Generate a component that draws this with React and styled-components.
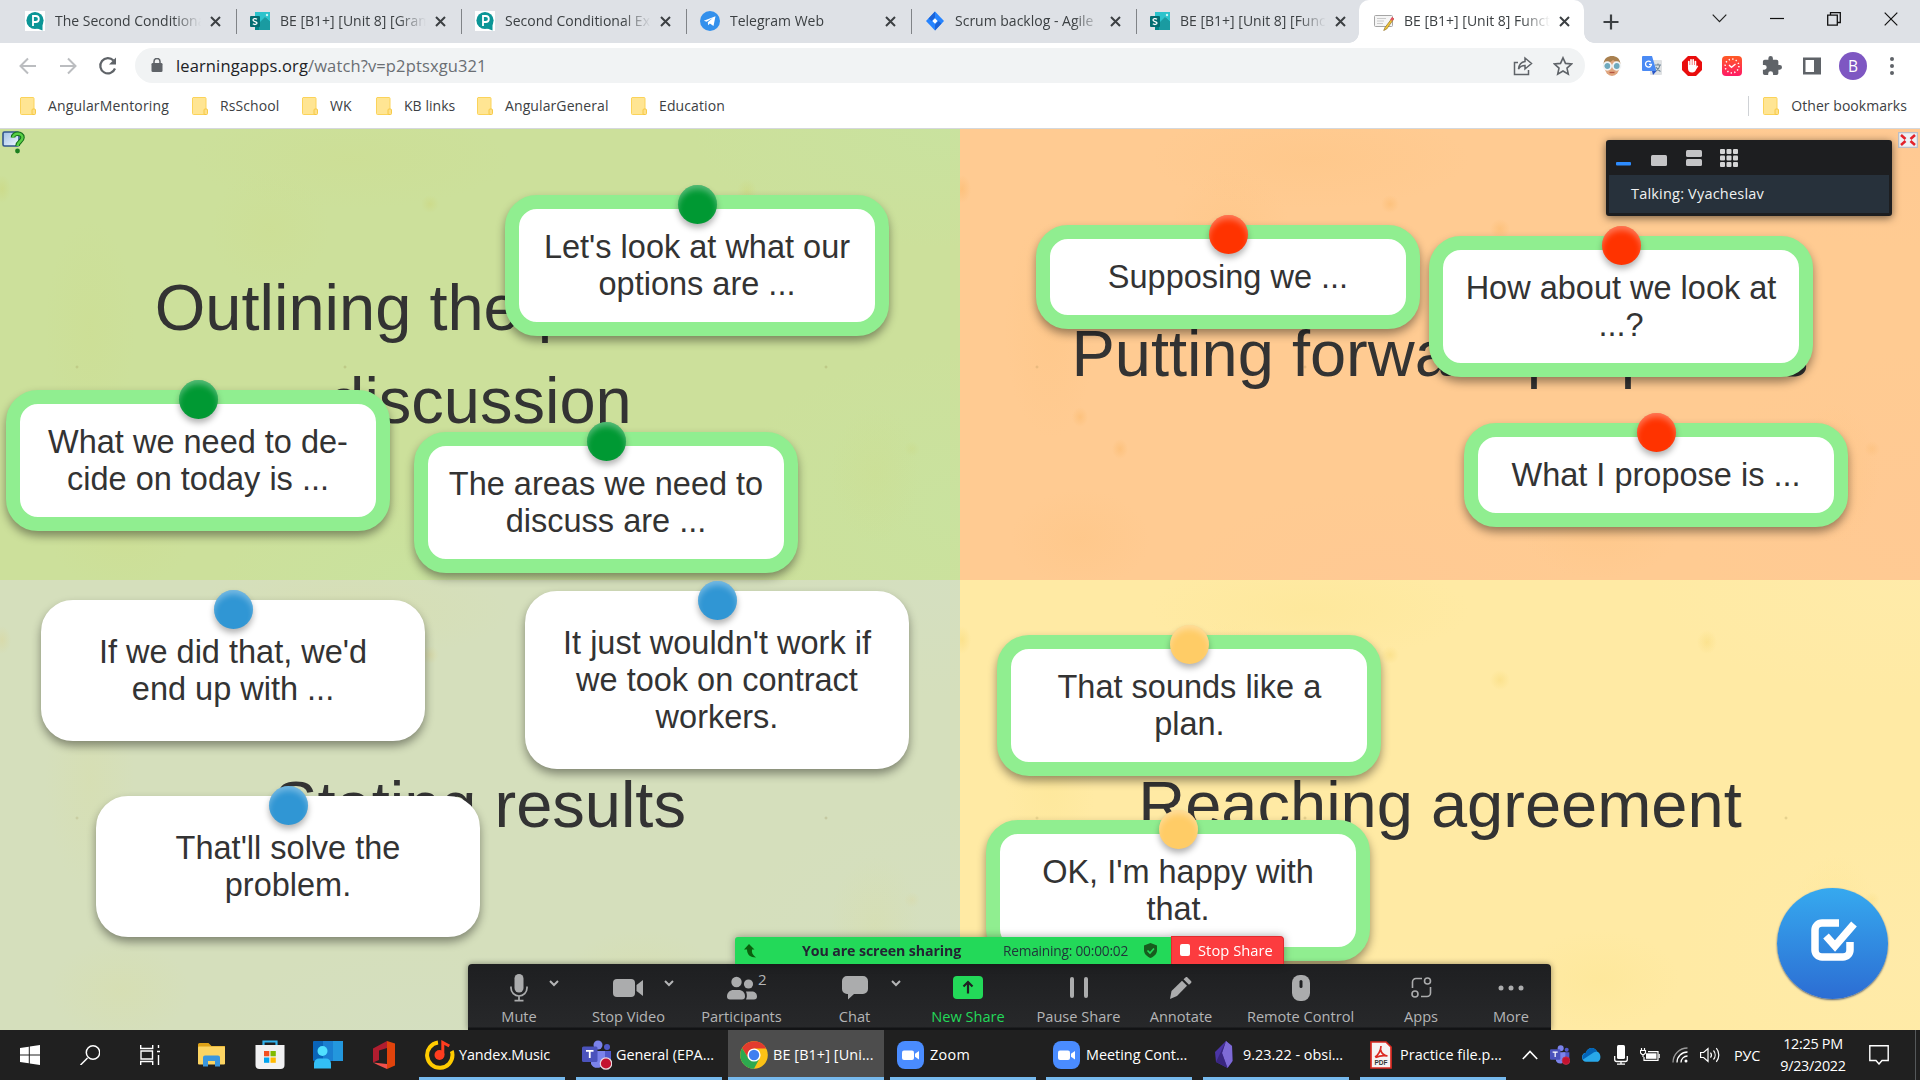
import React from "react";
import styled, { createGlobalStyle, css } from "styled-components";

const ui = `"Open Sans", "Noto Sans", sans-serif`;
const arial = `"Liberation Sans", Arial, sans-serif`;

const Global = createGlobalStyle`
  *, *::before, *::after { box-sizing: border-box; }
  html, body { margin: 0; padding: 0; overflow: hidden; }
  svg { display: block; flex: none; }
`;

const Desktop = styled.div`
  width: 1920px;
  height: 1080px;
  display: flex;
  flex-direction: column;
  position: relative;
  overflow: hidden;
  font-family: ${ui};
  color: #3c4043;
`;

/* ---------- browser chrome ---------- */
const TabStrip = styled.header`
  height: 43px;
  flex: none;
  display: flex;
  background: #dee1e6;
  padding-left: 11px;
`;
const Tab = styled.div`
  width: 225px;
  height: 43px;
  flex: none;
  display: flex;
  align-items: center;
  padding: 0 14px 1px 14px;
  position: relative;
  ${(p) =>
    p.$active
      ? css`
          background: #fff;
          border-radius: 10px 10px 0 0;
          margin-left: -2px;
          padding-left: 15px;
          &::before, &::after {
            content: "";
            position: absolute;
            bottom: 0;
            width: 10px;
            height: 10px;
          }
          &::before { left: -10px; background: radial-gradient(circle at 0 0, transparent 9.5px, #fff 10px); }
          &::after { right: -10px; background: radial-gradient(circle at 100% 0, transparent 9.5px, #fff 10px); }
        `
      : css`
          &::after {
            content: "";
            position: absolute;
            right: -1px;
            top: 9px;
            width: 1px;
            height: 25px;
            background: ${p.$last ? "transparent" : "#808387"};
          }
        `}
`;
const TabTitle = styled.span`
  width: 146px;
  margin: -2px 0 0 10px;
  font-size: 14px;
  white-space: nowrap;
  overflow: hidden;
  mask-image: linear-gradient(90deg, #000 118px, transparent 146px);
`;
const TabClose = styled.span`
  margin-left: 9px;
  display: flex;
`;
const StripSpacer = styled.div`
  flex: 1;
`;
const WindowControls = styled.div`
  width: 211px;
  height: 37px;
  display: flex;
  align-items: center;
  gap: 43px;
  padding-left: 3px;
`;
const NewTab = styled.div`
  display: flex;
  align-items: center;
  padding-left: 19px;
`;

const Toolbar = styled.div`
  height: 45px;
  flex: none;
  display: flex;
  align-items: center;
  background: #fff;
  padding-left: 18px;
`;
const NavButtons = styled.div`
  width: 117px;
  display: flex;
  gap: 20px;
`;
const Omnibox = styled.div`
  width: 1450px;
  height: 35px;
  border-radius: 18px;
  background: #f1f3f4;
  display: flex;
  align-items: center;
  padding: 0 12px 0 16px;
`;
const Url = styled.span`
  flex: 1;
  margin: -1px 0 0 13px;
  font-size: 16.5px;
  letter-spacing: 0.13px;
  color: #6a6e73;
  b { font-weight: 400; color: #202124; }
`;
const OmniActions = styled.div`
  display: flex;
  gap: 20px;
`;
const Extensions = styled.div`
  display: flex;
  align-items: center;
  gap: 20px;
  padding-left: 17px;
`;
const Avatar = styled.div`
  width: 28px;
  height: 28px;
  margin: 0 -1px 0 -3px;
  border-radius: 50%;
  background: #7e57c2;
  color: #fff;
  font-size: 15.5px;
  line-height: 28px;
  text-align: center;
`;

const Bookmarks = styled.nav`
  height: 41px;
  flex: none;
  background: #fff;
  border-bottom: 1px solid #d5d8dc;
  display: flex;
  align-items: center;
  padding: 0 13px 5px 20px;
  font-size: 14px;
`;
const Bookmark = styled.div`
  width: ${(p) => p.$w}px;
  display: flex;
  align-items: center;
  gap: 12px;
  white-space: nowrap;
  letter-spacing: ${(p) => p.$ls || 0}px;
`;
const BookmarkRule = styled.div`
  width: 1px;
  height: 20px;
  margin: 0 14px 0 auto;
  background: #cfd2d6;
`;

/* ---------- learning board ---------- */
const Board = styled.main`
  height: 901px;
  flex: none;
  position: relative;
  display: grid;
  grid-template-columns: 960px 960px;
  grid-template-rows: 451px 450px;
  overflow: hidden;
`;
const Quadrant = styled.section`
  display: flex;
  align-items: center;
  justify-content: center;
  padding: 0 60px;
  text-align: center;
  font: 65px/92.8px ${arial};
  color: #333;
  background:
    radial-gradient(ellipse 45px 110px at 90px 200px, ${(p) => p.$stain}, transparent),
    radial-gradient(ellipse 45px 70px at 875px 345px, ${(p) => p.$stain}, transparent),
    radial-gradient(ellipse 160px 50px at 350px 30px, ${(p) => p.$stain}, transparent),
    radial-gradient(ellipse 70px 50px at 120px 410px, ${(p) => p.$stain}, transparent),
    radial-gradient(ellipse 60px 60px at 270px 100px, ${(p) => p.$stain}, transparent),
    radial-gradient(ellipse 80px 50px at 640px 400px, ${(p) => p.$stain}, transparent),
    radial-gradient(ellipse 260px 120px at 950px 0, ${(p) => p.$tint}, transparent),
    radial-gradient(ellipse 240px 160px at 960px 380px, ${(p) => p.$tint}, transparent),
    radial-gradient(ellipse 200px 90px at 420px 451px, ${(p) => p.$tint}, transparent),
    radial-gradient(ellipse 10px 12px at 747px 62px, ${(p) => p.$spot}, transparent),
    radial-gradient(ellipse 10px 10px at 540px 100px, ${(p) => p.$spot}, transparent),
    radial-gradient(ellipse 9px 9px at 430px 75px, ${(p) => p.$spot}, transparent),
    radial-gradient(ellipse 8px 10px at 120px 288px, ${(p) => p.$spot}, transparent),
    radial-gradient(ellipse 8px 10px at 160px 320px, ${(p) => p.$spot}, transparent),
    radial-gradient(ellipse 8px 8px at 912px 320px, ${(p) => p.$spot}, transparent),
    radial-gradient(ellipse 9px 14px at 2px 60px, ${(p) => p.$spot}, transparent),
    radial-gradient(circle 2px at 345px 238px, rgba(130, 110, 50, 0.3), transparent),
    radial-gradient(circle 2px at 77px 238px, rgba(130, 110, 50, 0.3), transparent),
    radial-gradient(circle 2px at 826px 238px, rgba(130, 110, 50, 0.3), transparent),
    ${(p) => p.$bg};
`;
const Heading = styled.h2`
  margin: 0;
  font: inherit;
`;
const Card = styled.article`
  position: absolute;
  left: ${(p) => p.$x}px;
  top: ${(p) => p.$y}px;
  width: 384px;
  border: 14px solid ${(p) => (p.$solved ? "#90ee90" : "#fff")};
  border-radius: 32px;
  background: #fff;
  padding: 19.5px 0;
  text-align: center;
  white-space: pre-line;
  font: 32.5px/37px ${arial};
  color: #333;
  box-shadow: 0 5px 10px rgba(0, 0, 0, 0.4);
`;
const Pin = styled.i`
  position: absolute;
  left: 159px;
  top: -24px;
  width: 39px;
  height: 39px;
  border-radius: 50%;
  background: ${(p) => p.$c};
  box-shadow: inset 0 5px 6px -1px rgba(255, 255, 255, 0.35), 0 4px 6px rgba(0, 0, 0, 0.3);
`;
const CornerIcon = styled.div`
  position: absolute;
  top: ${(p) => p.$top}px;
  ${(p) => (p.$right ? "right: 2px;" : "left: 2px;")}
`;
const CheckButton = styled.button`
  position: absolute;
  left: 1777px;
  top: 759px;
  width: 111px;
  height: 111px;
  padding: 0 0 6px;
  border: 0;
  border-radius: 50%;
  display: grid;
  place-items: center;
  background: linear-gradient(#36a9ef, #2c6dd3);
  box-shadow: 0 1px 2px rgba(20, 40, 90, 0.7);
`;

/* ---------- meeting overlays ---------- */
const Talking = styled.aside`
  position: absolute;
  left: 1606px;
  top: 140px;
  width: 286px;
  height: 76px;
  border-radius: 3px;
  background: #1d1e20;
  padding: 0 3px 3px;
  box-shadow: 0 2px 8px rgba(0, 0, 0, 0.55);
`;
const ViewModes = styled.div`
  height: 35px;
  padding: 9px 0 0 7px;
`;
const Speaker = styled.div`
  height: 38px;
  background: #27313b;
  color: #f0f1f2;
  font-size: 14.5px;
  letter-spacing: 0.2px;
  line-height: 37px;
  padding-left: 22px;
`;
const ShareBar = styled.div`
  position: absolute;
  left: 735px;
  top: 936px;
  height: 28px;
  display: flex;
  align-items: flex-end;
  filter: drop-shadow(0 0 4px rgba(0, 0, 0, 0.35));
`;
const ShareStatus = styled.div`
  width: 436px;
  height: 27px;
  background: #23d959;
  border-radius: 3px 0 0 0;
  display: flex;
  align-items: center;
  padding-left: 9px;
  color: #20363a;
  font-size: 13.7px;
  white-space: nowrap;
  strong { width: 201px; margin-left: 46px; color: #232333; font-size: 14.2px; font-weight: 700; letter-spacing: -0.1px; }
  span { width: 141px; letter-spacing: -0.2px; }
`;
const StopShare = styled.div`
  width: 113px;
  height: 28px;
  background: #fc3c3f;
  border: 1px solid #e22b30;
  border-bottom: 0;
  border-radius: 0 4px 0 0;
  display: flex;
  align-items: center;
  gap: 8px;
  padding: 0 0 1px 8px;
  color: #fff;
  font-size: 14.7px;
  letter-spacing: 0.05px;
  white-space: nowrap;
  &::before { content: ""; width: 10px; height: 12px; border-radius: 2px; background: #fff; }
`;
const MeetingBar = styled.div`
  position: absolute;
  left: 468px;
  top: 964px;
  width: 1083px;
  height: 66px;
  display: flex;
  border-radius: 4px 4px 0 0;
  background: linear-gradient(#1e1f21, #27282a 63px, #121315 64px);
  box-shadow: 0 0 6px rgba(0, 0, 0, 0.4);
`;
const Action = styled.div`
  position: relative;
  flex: none;
  width: ${(p) => p.$w}px;
  display: flex;
  flex-direction: column;
  align-items: center;
  color: ${(p) => (p.$hot ? "#23d959" : "#b4b5b6")};
  font-size: 14.6px;
  line-height: 20px;
  white-space: nowrap;
  svg { color: ${(p) => (p.$hot ? "#23d959" : "#abacad")}; }
`;
const Glyph = styled.div`
  height: 42px;
  padding-top: 5px;
  display: flex;
  align-items: center;
`;
const Caret = styled.span`
  position: absolute;
  left: ${(p) => p.$x}px;
  top: 16px;
`;
const Count = styled.span`
  position: absolute;
  left: 71px;
  top: 5px;
  font-size: 15px;
`;

/* ---------- taskbar ---------- */
const Taskbar = styled.footer`
  height: 50px;
  flex: none;
  position: relative;
  z-index: 2;
  display: flex;
  background: #202020;
  color: #fff;
  font-size: 14.4px;
`;
const Launcher = styled.div`
  width: ${(p) => p.$w}px;
  display: flex;
  align-items: center;
  justify-content: center;
`;
const Task = styled.div`
  width: ${(p) => p.$w}px;
  margin-right: ${(p) => p.$gap}px;
  height: 50px;
  display: flex;
  align-items: center;
  gap: ${(p) => p.$ig}px;
  padding: 4px 0 2px ${(p) => p.$pl}px;
  white-space: nowrap;
  letter-spacing: ${(p) => p.$ls || 0}px;
  border-bottom: 3px solid #76b9ed;
  background: ${(p) => (p.$active ? "#4d4d4d" : "none")};
`;
const Tray = styled.div`
  display: flex;
  align-items: center;
  margin-left: 16px;
  gap: 12px;
`;
const Lang = styled.span`
  margin-left: 2px;
  width: 26px;
  font-size: 14.4px;
  letter-spacing: -0.2px;
`;
const Clock = styled.div`
  width: 70px;
  margin-left: 6px;
  text-align: center;
  font-size: 14.4px;
  line-height: 22.5px;
  letter-spacing: -0.3px;
  white-space: nowrap;
`;
const Notice = styled.div`
  display: flex;
  margin-left: 9px;
`;
const PeekLine = styled.div`
  width: 1px;
  height: 50px;
  margin-left: 14px;
  background: #55585a;
`;

/* ---------- icons ---------- */
const Stroke = ({ w = 20, h = w, vb, d, c = "#5f6368", s = 2, children, ...r }) => (
  <svg width={w} height={h} viewBox={vb || `0 0 ${w} ${h}`} fill="none" stroke={c} strokeWidth={s} {...r}>
    {d && <path d={d} />}
    {children}
  </svg>
);
const PearIcon = () => (
  <svg width="20" height="20">
    <rect width="20" height="20" fill="#fff" />
    <circle cx="10" cy="9.5" r="8.6" fill="#0a9596" />
    <path d="M11 17 17.5 13v6.5z" fill="#0a9596" />
    <path d="M8 15V5h2.8a3 3 0 0 1 0 6H8" fill="none" stroke="#fff" strokeWidth="1.8" />
  </svg>
);
const SwayIcon = () => (
  <svg width="20" height="20">
    <path d="M5 1h15v18H5z" fill="#038387" />
    <path d="M5 1h15v10l-4-4-6 6-5-4z" fill="#2cc3cc" />
    <path d="M9 12l6-6 5 5v8H9z" fill="#1a9ba1" />
    <circle cx="17" cy="4" r="1.2" fill="#c8f4f5" />
    <rect y="5" width="10" height="11" rx="1" fill="#036c70" />
    <path d="M7 8.3C5.500 7.200 3 7.600 3 9.100c0 2 4 1 4 3 0 1.600-2.700 1.800-4.200.7" fill="none" stroke="#fff" strokeWidth="1.3" />
  </svg>
);
const TelegramIcon = () => (
  <svg width="20" height="20">
    <circle cx="10" cy="10" r="10" fill="#3390ec" />
    <path d="M3.800 9.800 15.500 5.200 13.500 15l-3.600-2.500-1.800 1.700-.3-3 5-4.300-6.200 3.900z" fill="#fff" />
  </svg>
);
const JiraIcon = () => (
  <svg width="20" height="20">
    <path d="M10 .5 19 10 10 19.500 1 10z" fill="#2684ff" />
    <path d="M10 .5v6L6.500 10 3.500 7.400z" fill="#1b63d8" />
    <path d="M10 19.500v-6l3.500-3.500 3 2.600z" fill="#1b63d8" />
    <path d="M10 7.300 12.600 10 10 12.700 7.400 10z" fill="#fff" />
  </svg>
);
const NotePencil = () => (
  <svg width="20" height="20">
    <rect x=".5" y="4.500" width="18" height="11" rx="1" fill="#f5f5f5" stroke="#a5a5a5" />
    <path d="M3 7.500h9M3 10h7M3 12.500h6" stroke="#c9c9c9" />
    <path d="M18.500 6.500 11 16.500l-1.300 3 3-1.500L19.800 8z" fill="#f0c536" stroke="#927126" strokeWidth=".7" />
    <path d="M18 6l2 1.500-1.800 2.500-2-1.500z" fill="#e45164" />
  </svg>
);
const CloseX = () => <Stroke w={11} d="M1 1l9 9M10 1l-9 9" c="#3c4043" s={2} />;
const Folder = () => (
  <svg width="16" height="18">
    <path d="M1 .5h12a1 1 0 0 1 1 1v16H1.500a1 1 0 0 1-1-1V1z" fill="#ffe593" stroke="#fbd35a" />
    <rect x="12" y="12" width="3.500" height="5.500" rx="1" fill="#ffe08a" stroke="#f5c63d" strokeWidth=".9" />
  </svg>
);
const Lock = () => (
  <svg width="12" height="15" viewBox="0.500 0.500 12 15">
    <rect x="1" y="5.500" width="11" height="9" rx="1.300" fill="#5f6368" />
    <path d="M3.500 6V4a3 3 0 0 1 6 0v2" fill="none" stroke="#5f6368" strokeWidth="1.500" />
  </svg>
);
const FaceIcon = () => (
  <svg width="20" height="20">
    <ellipse cx="10" cy="11" rx="7.500" ry="9" fill="#dfa57e" />
    <path d="M1.500 8C2 2 6 0 10 0s8 2 8.500 8C15 7 13 5 11 4 9 6 5 8 1.500 8z" fill="#a9804f" />
    <circle cx="5.300" cy="10" r="3.800" fill="#6fa9bd" stroke="#f2f4f5" strokeWidth="1.800" />
    <circle cx="14.700" cy="10" r="3.800" fill="#6fa9bd" stroke="#f2f4f5" strokeWidth="1.800" />
    <path d="M7.500 16.500h5" stroke="#b5533f" strokeWidth="1.300" />
  </svg>
);
const TranslateIcon = () => (
  <svg width="20" height="20">
    <rect x="8" y="4" width="12" height="15" rx="1" fill="#dfe1e3" />
    <path d="M1 0h9l4.500 15H1a1 1 0 0 1-1-1V1a1 1 0 0 1 1-1z" fill="#4a8af4" />
    <path d="M10 15h4.500L11 19z" fill="#2a56c6" />
    <path d="M8.800 6.200A3 3 0 1 0 9.500 8.300H7" fill="none" stroke="#fff" strokeWidth="1.300" />
    <path d="M13 9h6M16 7.500V9m2 0c-.5 3-2.500 5-4 6m0-4c1 2 2.500 3.500 4.500 4.500" fill="none" stroke="#6f8799" strokeWidth="1.100" />
  </svg>
);
const AdblockIcon = () => (
  <svg width="20" height="20">
    <path d="M6 0h8l6 6v8l-6 6H6l-6-6V6z" fill="#e90d0d" />
    <path d="M6.800 11V5.500M9 10V3.800M11.200 10V3.800M13.400 10V5.500" stroke="#fff" strokeWidth="1.700" strokeLinecap="round" />
    <path d="M6 9h8.300v1.500l1.500-1 .4.800-2.200 3.500c-.7 1.700-1.700 2.700-3.800 2.700C7.500 16.500 6 15 6 12.500z" fill="#fff" />
  </svg>
);
const ClockExt = () => (
  <svg width="20" height="20">
    <defs>
      <linearGradient id="ck" x2="0" y2="1">
        <stop stopColor="#ff5a24" />
        <stop offset="1" stopColor="#ff1a66" />
      </linearGradient>
    </defs>
    <rect width="20" height="20" rx="4" fill="url(#ck)" />
    <circle cx="10" cy="10" r="6.900" fill="none" stroke="#fff" strokeWidth="1.500" strokeDasharray="1.300 2.313" />
    <path d="M7 9l2.500 2.300L13.500 8" fill="none" stroke="#fff" strokeWidth="1.300" />
  </svg>
);
const Puzzle = () => (
  <svg width="20" height="20" viewBox="1 1 22 22">
    <path fill="#5f6368" d="M20.500 11H19V7a2 2 0 0 0-2-2h-4V3.500a2.500 2.500 0 0 0-5 0V5H4a2 2 0 0 0-2 2v3.800h1.500a2.700 2.700 0 0 1 0 5.400H2V20a2 2 0 0 0 2 2h3.800v-1.500a2.700 2.700 0 0 1 5.400 0V22H17a2 2 0 0 0 2-2v-4h1.500a2.500 2.500 0 0 0 0-5z" />
  </svg>
);
const SidePanel = () => (
  <svg width="20" height="20">
    <path fill="#5f6368" fillRule="evenodd" d="M1 1.500h18v17H1zM3.500 4v12H12V4z" />
  </svg>
);
const HelpIcon = () => (
  <svg width="24" height="24">
    <defs>
      <linearGradient id="hq" x2="1" y2="1">
        <stop stopColor="#9fbfe6" />
        <stop offset="1" stopColor="#f2f9ff" />
      </linearGradient>
    </defs>
    <rect x="1" y="1" width="16" height="14" rx="1.500" fill="url(#hq)" stroke="#31558e" strokeWidth="1.600" />
    <path d="M11 6.500c0-5 9.500-5 9.500 0 0 4-5 4-5 8.500" fill="none" stroke="#14701a" strokeWidth="4.600" />
    <path d="M11 6.500c0-5 9.500-5 9.500 0 0 4-5 4-5 8.500" fill="none" stroke="#58cf45" strokeWidth="2.400" />
    <circle cx="15.500" cy="20" r="2.400" fill="#1c7f20" />
  </svg>
);
const ExitFull = () => (
  <svg width="20" height="16">
    <rect x=".5" y=".5" width="19" height="15" fill="#edf1f5" stroke="#bcbfc7" strokeWidth="1.500" />
    <path d="M3 3l4.500 4M17 3l-4.500 4M3 13l4.500-4M17 13l-4.500-4" stroke="#e3242b" strokeWidth="2.600" />
  </svg>
);
const ChromeIcon = () => (
  <svg width="28" height="28" viewBox="-14 -14 28 28">
    <circle r="13.800" fill="#fbc116" />
    <path d="M0-6.500H12.200A13.800 13.800 0 0 0-11.950-6.900L-5.630 3.250z" fill="#e33b2e" />
    <path d="M-5.630 3.250-11.950-6.900A13.800 13.800 0 0 0 0 13.800L5.630 3.250z" fill="#2da94f" />
    <circle r="6.600" fill="#fff" />
    <circle r="5.200" fill="#3f7ff0" />
  </svg>
);
const ZoomIcon = () => (
  <svg width="27" height="28">
    <rect width="27" height="28" rx="8" fill="#4a8cff" />
    <rect x="5" y="9.500" width="12" height="9.500" rx="2" fill="#fff" />
    <path d="M18 12.800l4-2.800v8.500l-4-2.800z" fill="#fff" />
  </svg>
);
const TeamsIcon = ({ s = 30 }) => (
  <svg width={s} height={s} viewBox="0 0 30 30">
    <circle cx="16" cy="5" r="4.500" fill="#7b83eb" />
    <circle cx="25" cy="7" r="3" fill="#5059c9" />
    <path d="M19 11h10v8a5 5 0 0 1-8 4z" fill="#5059c9" />
    <path d="M9 11h14v10a7.500 7.500 0 0 1-14 3z" fill="#7b83eb" />
    <rect y="6.500" width="15.500" height="15.500" rx="1.500" fill="#4b53bc" />
    <path d="M4 10.800h7.500M7.750 10.800V18" stroke="#fff" strokeWidth="1.800" />
    <circle cx="24" cy="23.500" r="5.700" fill="#c4122f" stroke={s > 24 ? "#e9dbe0" : "#c4314b"} strokeWidth="1.200" />
  </svg>
);
const WindowsIcon = () => (
  <svg width="20" height="20">
    <path fill="#fff" d="M0 2.900 8.800 1.700V9.500H0zM9.800 1.500 20 0v9.500H9.800zM0 10.500h8.800v7.800L0 17.100zM9.800 10.500H20V20L9.800 18.500z" />
  </svg>
);
const ExplorerIcon = () => (
  <svg width="28" height="24">
    <path d="M0 1.500A1.500 1.500 0 0 1 1.500 0h9l3 3H27v18H0z" fill="#dda117" />
    <rect y="3.500" width="27" height="18" rx="1" fill="#fcd462" />
    <path d="M5 23.500v-9a2 2 0 0 1 2-2h13a2 2 0 0 1 2 2v9h-5V18h-7v5.500z" fill="#3a96dd" />
  </svg>
);
const StoreIcon = () => (
  <svg width="30" height="30">
    <path d="M8.500 8V1.500h13V8" fill="none" stroke="#32b4ef" strokeWidth="2.200" />
    <path d="M.5 5h29v20a4 4 0 0 1-4 4h-21a4 4 0 0 1-4-4z" fill="#f1f1f2" />
    <path d="M9 11h5.300v5.300H9z" fill="#f25022" />
    <path d="M15.500 11h5.300v5.300h-5.300z" fill="#7fba00" />
    <path d="M9 17.500h5.300v5.300H9z" fill="#00a4ef" />
    <path d="M15.500 17.500h5.300v5.300h-5.300z" fill="#ffb900" />
  </svg>
);
const PeopleIcon = () => (
  <svg width="30" height="28">
    <rect width="30" height="20" rx="1" fill="#0a64b8" />
    <path d="M10 0h10v20H10z" fill="#1a7fd1" />
    <path d="M20 0h10v20H20z" fill="#2397dd" />
    <circle cx="9.500" cy="10" r="5" fill="#50e0ff" />
    <path d="M1 27.500v-5a5 5 0 0 1 5-5h7a5 5 0 0 1 5 5v5z" fill="#33bff5" />
  </svg>
);
const OfficeIcon = () => (
  <svg width="24" height="28">
    <path d="M15 0 23 2.500v22L15 28z" fill="#e0430c" />
    <path d="M15 0v7L7 9.500V19l-6 2.500V7.500z" fill="#b01d2f" />
    <path d="M1 21.500 15 23v5L6 24z" fill="#f0504c" />
  </svg>
);
const YandexIcon = () => (
  <svg width="30" height="30">
    <path d="M13 2.500A12.700 12.700 0 1 0 27.500 15c0-1.500-.3-3-.8-4" fill="none" stroke="#fc0" strokeWidth="4" />
    <circle cx="14.500" cy="15" r="5" fill="#ff3d1f" />
    <path d="M17.800 15V2.500l6.500 3.500" fill="none" stroke="#ff3d1f" strokeWidth="3" />
  </svg>
);
const ObsidianIcon = () => (
  <svg width="18" height="28">
    <path d="M11 0l6 5 .5 15-5 7L1 21 0 11z" fill="#4b35a5" />
    <path d="M11 0l6 5 .5 15-5 7L7 12z" fill="#7e6ad6" />
    <path d="M11 0 7 12l5.500 15L9 25 1 21z" fill="#39267f" />
  </svg>
);
const PdfIcon = () => (
  <svg width="22" height="28">
    <path d="M1 1h15l5 5v21H1z" fill="#f6f3f2" stroke="#dc2b22" strokeWidth="1.700" />
    <path d="M5 16c3-1.500 6-6.500 6-11M10.500 8.500c1 4 3.500 6 7 6.500-4-1-9 .2-12 1.500" fill="none" stroke="#dc2b22" strokeWidth="1.700" />
    <text x="11" y="24" fontSize="6.500" fontWeight="700" textAnchor="middle" fill="#333" fontFamily="Liberation Sans, sans-serif">PDF</text>
  </svg>
);
const CaretIcon = () => <Stroke w={10} h={7} d="M1 1l4 4 4-4" c="#b4b5b6" s={2} />;
const MicIcon = () => (
  <svg width="18" height="28" fill="none" stroke="currentColor" strokeWidth="1.700">
    <rect x="4.500" y="0" width="9" height="18.500" rx="4.500" fill="currentColor" stroke="none" />
    <path d="M1 12.500V14a8 8 0 0 0 16 0v-1.500M9 22v4.500M4.500 26.700h9" />
  </svg>
);
const VideoIcon = () => (
  <svg width="31" height="20" fill="currentColor">
    <rect y="1" width="22" height="18" rx="4" />
    <path d="M23.500 7l6.500-5v16l-6.500-5z" />
  </svg>
);
const ParticipantsIcon = () => (
  <svg width="30" height="24" fill="currentColor">
    <circle cx="9.500" cy="6" r="5.200" />
    <circle cx="21.500" cy="8" r="4.600" />
    <path d="M0 20.500c0-4 3-6.500 6.500-6.500h5c4 0 6.500 2.500 6.500 6.500 0 2-1 3-3 3H3c-2 0-3-1-3-3z" />
    <path d="M19 15.500h5.500c3.500 0 5.500 2 5.500 5 0 2-1 3-3 3h-8c1-2 1.300-5 0-8z" />
  </svg>
);
const ChatIcon = () => (
  <svg width="26" height="24" fill="currentColor">
    <path d="M5 0h16a5 5 0 0 1 5 5v8a5 5 0 0 1-5 5h-9l-6 5.500V18H5a5 5 0 0 1-5-5V5a5 5 0 0 1 5-5z" />
  </svg>
);
const NewShareIcon = () => (
  <svg width="30" height="23">
    <rect width="30" height="23" rx="4" fill="currentColor" />
    <path d="M15 17.500V6.500M10.500 10.500 15 6l4.500 4.500" fill="none" stroke="#1f2022" strokeWidth="2.200" />
  </svg>
);
const PauseIcon = () => (
  <svg width="18" height="21" fill="currentColor">
    <rect width="4" height="21" rx="2" />
    <rect x="14" width="4" height="21" rx="2" />
  </svg>
);
const PencilIcon = () => (
  <svg width="22" height="22" fill="currentColor">
    <path d="M0 22l1.500-8L12 3.800l5 5L7 19z" />
    <path d="M13.500 2.300 15.500.5c.6-.6 1.300-.6 2 0l3.500 3.500c.6.600.6 1.400 0 2l-2 1.800z" />
  </svg>
);
const MouseIcon = () => (
  <svg width="18" height="26">
    <rect width="18" height="26" rx="8" fill="currentColor" />
    <rect x="7.500" y="5" width="3" height="8" rx="1.500" fill="#1f2022" />
  </svg>
);
const AppsIcon = () => (
  <svg width="21" height="21" fill="none" stroke="currentColor" strokeWidth="1.600">
    <circle cx="16.500" cy="4" r="3" />
    <circle cx="4" cy="17" r="3" />
    <path d="M1.500 11V5a3.500 3.500 0 0 1 3.500-3.500h6M10 19.500h6a3.500 3.500 0 0 0 3.500-3.500v-6" />
  </svg>
);
const MoreIcon = () => (
  <svg width="26" height="6" fill="currentColor">
    <circle cx="3" cy="3" r="2.500" />
    <circle cx="13" cy="3" r="2.500" />
    <circle cx="23" cy="3" r="2.500" />
  </svg>
);

/* ---------- data ---------- */
const tabs = [
  { icon: <PearIcon />, title: "The Second Conditional" },
  { icon: <SwayIcon />, title: "BE [B1+] [Unit 8] [Grammar]" },
  { icon: <PearIcon />, title: "Second Conditional Exercises" },
  { icon: <TelegramIcon />, title: "Telegram Web" },
  { icon: <JiraIcon />, title: "Scrum backlog - Agile" },
  { icon: <SwayIcon />, title: "BE [B1+] [Unit 8] [Functions]", last: true },
  { icon: <NotePencil />, title: "BE [B1+] [Unit 8] Functions", active: true },
];
const bookmarks = [
  ["AngularMentoring", 172, 0.15],
  ["RsSchool", 110, 0.1],
  ["WK", 74, 0],
  ["KB links", 101, 0.05],
  ["AngularGeneral", 154, 0.1],
  ["Education", 110, 0.1],
];
const G = "#093";
const R = "#f30";
const B = "#3096d4";
const Y = "#fc6";
const cards = [
  [505, 195, "Let's look at what our\noptions are ...", G, 1],
  [6, 390, "What we need to de-\ncide on today is ...", G, 1],
  [414, 432.4, "The areas we need to\ndiscuss are ...", G, 1],
  [1036, 225, "Supposing we ...", R, 1],
  [1429, 236, "How about we look at\n...?", R, 1],
  [1464, 423.4, "What I propose is ...", R, 1],
  [41, 600, "If we did that, we'd\nend up with ...", B, 0],
  [525, 591.4, "It just wouldn't work if\nwe took on contract\nworkers.", B, 0],
  [96, 796.4, "That'll solve the\nproblem.", B, 0],
  [997.4, 635, "That sounds like a\nplan.", Y, 1],
  [986, 820, "OK, I'm happy with\nthat.", Y, 1],
];
const actions = [
  { w: 102, label: "Mute", icon: <MicIcon />, caret: 81 },
  { w: 117, label: "Stop Video", icon: <VideoIcon />, caret: 94 },
  { w: 109, label: "Participants", icon: <ParticipantsIcon />, count: 2 },
  { w: 117, label: "Chat", icon: <ChatIcon />, caret: 95 },
  { w: 110, label: "New Share", icon: <NewShareIcon />, hot: true },
  { w: 111, label: "Pause Share", icon: <PauseIcon /> },
  { w: 94, label: "Annotate", icon: <PencilIcon /> },
  { w: 145, label: "Remote Control", icon: <MouseIcon /> },
  { w: 96, label: "Apps", icon: <AppsIcon /> },
  { w: 84, label: "More", icon: <MoreIcon /> },
];
const launchers = [
  [60, <WindowsIcon />],
  [60, <Stroke w={20} c="#fff" s={1.5} d="M7.500 13 .5 20"><circle cx="13" cy="7.500" r="6.700" /></Stroke>],
  [60, <Stroke w={20} c="#fff" s={1.4} d="M.7 0v3.500h12V0M.7 20v-3.500h12V20M1 6h11.500v8H1zM18.500 0v3M18.500 10v10M17 6.500h3" />],
  [64, <ExplorerIcon />],
  [52, <StoreIcon />],
  [64, <PeopleIcon />],
  [48, <OfficeIcon />],
];
const tasks = [
  { w: 146, gap: 11, pl: 6, ig: 4, ls: -0.25, icon: <YandexIcon />, label: "Yandex.Music" },
  { w: 146, gap: 6, pl: 6, ig: 4, ls: -0.15, icon: <TeamsIcon />, label: "General (EPA..." },
  { w: 156, gap: 6, pl: 12, ig: 5, ls: -0.05, icon: <ChromeIcon />, label: "BE [B1+] [Uni...", active: true },
  { w: 146, gap: 10, pl: 7, ig: 6, ls: 0.2, icon: <ZoomIcon />, label: "Zoom" },
  { w: 146, gap: 11, pl: 7, ig: 6, ls: -0.15, icon: <ZoomIcon />, label: "Meeting Cont..." },
  { w: 146, gap: 11, pl: 12, ig: 10, ls: -0.15, icon: <ObsidianIcon />, label: "9.23.22 - obsi..." },
  { w: 146, gap: 0, pl: 10, ig: 8, ls: -0.1, icon: <PdfIcon />, label: "Practice file.p..." },
];

export default function App() {
  return (
    <Desktop>
      <Global />
      <TabStrip>
        {tabs.map((t, i) => (
          <Tab key={i} $active={t.active} $last={t.last}>
            {t.icon}
            <TabTitle>{t.title}</TabTitle>
            <TabClose><CloseX /></TabClose>
          </Tab>
        ))}
        <NewTab><Stroke w={16} d="M8 .5v15M.5 8h15" c="#3c4043" s={2.2} /></NewTab>
        <StripSpacer />
        <WindowControls>
          <Stroke w={15} h={9} d="M.7.7l6.800 7 6.800-7" c="#222" s={1.2} />
          <Stroke w={14} h={3} d="M0 1.500h14" c="#111" s={1.2} />
          <Stroke w={14} h={14} d="M.7 3.200h9.600v10H.7zM3.500 3V.7h9.800v9.800h-2.800" c="#111" s={1.3} />
          <Stroke w={14} h={14} d="M.7.7l12.600 12.600M13.300.7.7 13.300" c="#111" s={1.2} />
        </WindowControls>
      </TabStrip>

      <Toolbar>
        <NavButtons>
          <Stroke w={20} d="M18 10H2.500M10 2.500 2.500 10l7.500 7.500" c="#bbbdc0" />
          <Stroke w={20} d="M2 10h15.500M10 2.500l7.500 7.500-7.500 7.500" c="#bbbdc0" />
          <Stroke w={20} d="M15.500 4.600A7.600 7.600 0 1 0 17 12.500" c="#5f6368" s={2.2}>
            <path d="M18 1.500v7h-7z" fill="#5f6368" stroke="none" />
          </Stroke>
        </NavButtons>
        <Omnibox>
          <Lock />
          <Url><b>learningapps.org</b>/watch?v=p2ptsxgu321</Url>
          <OmniActions>
            <Stroke w={20} d="M5 6.500H1.500v12h14V14M12 2l6.500 5.500L12 13v-3.500c-3 0-5 1-6.500 3.500.5-4.500 3-7 6.500-7.500z" s={1.5} />
            <Stroke w={20} d="M10 1.800l2.500 5.600 6 .6-4.500 4.100 1.300 6L10 15l-5.300 3.100 1.300-6L1.500 8l6-.6z" s={1.6} />
          </OmniActions>
        </Omnibox>
        <Extensions>
          <FaceIcon />
          <TranslateIcon />
          <AdblockIcon />
          <ClockExt />
          <Puzzle />
          <SidePanel />
          <Avatar>B</Avatar>
          <svg width="14" height="20" fill="#5f6368">
            <circle cx="6" cy="3" r="2" />
            <circle cx="6" cy="10" r="2" />
            <circle cx="6" cy="17" r="2" />
          </svg>
        </Extensions>
      </Toolbar>

      <Bookmarks>
        {bookmarks.map(([label, w, ls]) => (
          <Bookmark key={label} $w={w} $ls={ls}><Folder />{label}</Bookmark>
        ))}
        <BookmarkRule />
        <Bookmark $ls={0.05}><Folder />Other bookmarks</Bookmark>
      </Bookmarks>

      <Board>
        <Quadrant $bg="#cce09b" $stain="rgba(206,220,140,.3)" $spot="rgba(205,210,110,.35)" $tint="rgba(200,227,160,.7)">
          <Heading>Outlining the points for<br />discussion</Heading>
        </Quadrant>
        <Quadrant $bg="#ffcb92" $stain="rgba(253,194,126,.3)" $spot="rgba(250,180,95,.4)" $tint="rgba(255,200,148,.6)">
          <Heading>Putting forward proposals</Heading>
        </Quadrant>
        <Quadrant $bg="#d5dfbc" $stain="rgba(216,222,168,.4)" $spot="rgba(222,210,140,.35)" $tint="rgba(212,223,194,.6)">
          <Heading>Stating results</Heading>
        </Quadrant>
        <Quadrant $bg="#ffeaa4" $stain="rgba(252,229,145,.4)" $spot="rgba(246,214,110,.4)" $tint="rgba(255,235,172,.6)">
          <Heading>Reaching agreement</Heading>
        </Quadrant>
        <CornerIcon $top={2}><HelpIcon /></CornerIcon>
        <CornerIcon $top={3} $right><ExitFull /></CornerIcon>
        {cards.map(([x, y, text, color, solved]) => (
          <Card key={text} $x={x} $y={y - 129} $solved={solved}>
            {text}
            <Pin $c={color} />
          </Card>
        ))}
        <CheckButton>
          <svg width="48" height="48" fill="none" stroke="#fff">
            <path d="M30 6H13a7 7 0 0 0-7 7v20a7 7 0 0 0 7 7h21a7 7 0 0 0 7-7V25" strokeWidth="7.500" />
            <path d="M17 19l9 10L45 7" strokeWidth="7.500" />
          </svg>
        </CheckButton>
      </Board>

      <Talking>
        <ViewModes>
          <svg width="130" height="20">
            <rect x="0" y="13" width="15" height="3.500" rx="1" fill="#2d8cff" />
            <rect x="35" y="6" width="16" height="11" rx="1.500" fill="#c4c4c6" />
            <rect x="70" y="1" width="16" height="7" rx="1.500" fill="#c4c4c6" />
            <rect x="70" y="10" width="16" height="7" rx="1.500" fill="#c4c4c6" />
            {[0, 1, 2].map((r) => [0, 1, 2].map((c) => (
              <rect key={`${r}${c}`} x={104 + c * 6.5} y={r * 6.5} width="5" height="5" rx="1" fill="#d5d5d6" />
            )))}
          </svg>
        </ViewModes>
        <Speaker>Talking: Vyacheslav</Speaker>
      </Talking>

      <MeetingBar>
        {actions.map((a) => (
          <Action key={a.label} $w={a.w} $hot={a.hot}>
            <Glyph>{a.icon}</Glyph>
            {a.label}
            {a.caret && <Caret $x={a.caret}><CaretIcon /></Caret>}
            {a.count && <Count>{a.count}</Count>}
          </Action>
        ))}
      </MeetingBar>
      <ShareBar>
        <ShareStatus>
          <svg width="12" height="14">
            <path d="M5 0l5.500 5.500H8C7.500 8.500 8.500 11 12 13.500 6 13.500 3 10.500 3 5.500H0z" fill="#0b5f0e" />
          </svg>
          <strong>You are screen sharing</strong>
          <span>Remaining: 00:00:02</span>
          <svg width="13" height="15">
            <path d="M6.500 0 13 2.500V7c0 4-3 6.500-6.500 8C3 13.500 0 11 0 7V2.500z" fill="#175c1e" />
            <path d="M3.500 7.500 6 10l4-4.500" fill="none" stroke="#23d959" strokeWidth="1.600" />
          </svg>
        </ShareStatus>
        <StopShare>Stop Share</StopShare>
      </ShareBar>

      <Taskbar>
        {launchers.map(([w, icon], i) => (
          <Launcher key={i} $w={w}>{icon}</Launcher>
        ))}
        <Launcher $w={11} />
        {tasks.map((t) => (
          <Task key={t.label} $w={t.w} $gap={t.gap} $pl={t.pl} $ig={t.ig} $ls={t.ls + 0.15} $active={t.active}>
            {t.icon}
            {t.label}
          </Task>
        ))}
        <Tray>
          <Stroke w={16} h={10} d="M.8 9 8 1.500 15.200 9" c="#fff" s={1.6} />
          <TeamsIcon s={20} />
          <svg width="20" height="16" viewBox="0 0 20 14" preserveAspectRatio="none">
            <path d="M4 13a4 4 0 0 1 0-8A6 6 0 0 1 15 4a5 5 0 0 1 1 9z" fill="#28a8ea" />
            <path d="M4 5A6 6 0 0 1 15 4l-3 .5L1 11A4 4 0 0 1 4 5z" fill="#0364b8" />
          </svg>
          <svg width="14" height="20" fill="none" stroke="#fff" strokeWidth="1.300">
            <rect x="3" y="0" width="8" height="14" rx="1.500" fill="#fff" stroke="none" />
            <path d="M.7 11v3.500a2 2 0 0 0 2 2h8.600a2 2 0 0 0 2-2V11M7 16.500V19M3 19.200h8" />
          </svg>
          <svg width="20" height="14" fill="none" stroke="#fff" strokeWidth="1.200">
            <path d="M4 9v3.400h14V3.600H8" />
            <rect x="6" y="5.300" width="10.500" height="5.500" fill="#fff" stroke="none" />
            <path d="M19.200 6v4M1.500 0v2.500M4.500 0v2.500M.5 2.500h5V5l-1.500 1.500h-2L.5 5zM3 6.500V9" />
          </svg>
          <svg width="16" height="16" fill="none" stroke="#fff" strokeWidth="1.300">
            <path d="M1 15.500A14.500 14.500 0 0 1 15.500 1" stroke="#9a9a9a" />
            <path d="M5 15.500A10.500 10.500 0 0 1 15.500 5M9 15.500A6.500 6.500 0 0 1 15.500 9" />
            <circle cx="14" cy="14" r="1.500" fill="#fff" stroke="none" />
          </svg>
          <svg width="20" height="16" fill="none" stroke="#fff" strokeWidth="1.200">
            <path d="M.6 5.500h3L8 1.500v13l-4.400-4h-3zM10.500 5.500a4 4 0 0 1 0 5M13.500 3.500a7 7 0 0 1 0 9M16.300 1.200a10.500 10.500 0 0 1 0 13.600" />
          </svg>
          <Lang>РУС</Lang>
          <Clock>12:25 PM<br />9/23/2022</Clock>
          <Notice><Stroke w={20} h={20} d="M.8.8h18.400v14.700H13L10 19l-3-3.500H.8z" c="#fff" s={1.4} /></Notice>
          <PeekLine />
        </Tray>
      </Taskbar>
    </Desktop>
  );
}
